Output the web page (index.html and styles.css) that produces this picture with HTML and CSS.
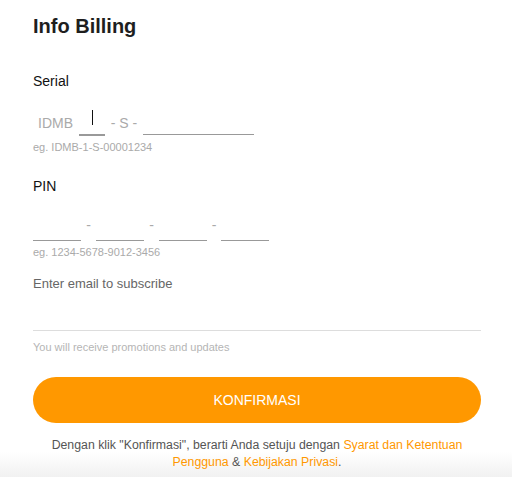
FILE: index.html
```html
<!DOCTYPE html>
<html>
<head>
  <meta charset="UTF-8">
  <title>Info Billing</title>
  <link rel="stylesheet" href="styles.css">
</head>
<body>
  <div class="page">
    <h1 class="title">Info Billing</h1>

    <div class="group">
      <label class="label">Serial</label>
      <div class="row serial">
        <span class="prefix">IDMB</span>
        <span class="field field-short">
          <input type="text">
          <span class="caret"></span>
        </span>
        <span class="sep">- S -</span>
        <input type="text" class="field field-long">
      </div>
      <p class="hint">eg. IDMB-1-S-00001234</p>
    </div>

    <div class="group group-pin">
      <label class="label">PIN</label>
      <div class="row pin">
        <input type="text" class="field field-pin">
        <span class="dash">-</span>
        <input type="text" class="field field-pin">
        <span class="dash">-</span>
        <input type="text" class="field field-pin">
        <span class="dash">-</span>
        <input type="text" class="field field-pin">
      </div>
      <p class="hint hint-pin">eg. 1234-5678-9012-3456</p>
    </div>

    <div class="email">
      <label class="email-label">Enter email to subscribe</label>
      <input type="email" class="email-input">
      <p class="hint hint-email">You will receive promotions and updates</p>
    </div>

    <button class="confirm">KONFIRMASI</button>

    <p class="terms">Dengan klik "Konfirmasi", berarti Anda setuju dengan <a href="#">Syarat dan Ketentuan</a><br><a href="#">Pengguna</a> &amp; <a href="#">Kebijakan Privasi</a>.</p>
  </div>
</body>
</html>
```

FILE: styles.css
```css
* {
  box-sizing: border-box;
}

html,
body{
  height: 100%;
  margin: 0;
  font-family: "Liberation Sans", Arial, sans-serif;
}

html{
  background: linear-gradient(to bottom, #fff 0, #fff 452px, #f1f1f1 477px);
}

body{
  background: transparent;
}

.page{
  padding: 0 31px 0 33px;
}

.title{
  margin: 14px 0 0;
  font-size: 20px;
  line-height: 24px;
  font-weight: bold;
  color: #1e1e1e;
}

.group{
  margin-top: 33px;
}

.group-pin{
  margin-top: 22px;
}

.label{
  display: block;
  font-size: 14px;
  line-height: 20px;
  color: #111;
}

.row{
  display: flex;
  align-items: flex-end;
  margin-top: 20px;
  font-size: 14px;
  line-height: 24px;
  color: #aaa;
}

.pin{
  margin-top: 21px;
}

.field,
.field input{
  height: 24px;
  margin: 0;
  padding: 0;
  border: 0;
  border-bottom: 1px solid #999;
  background: transparent;
  font: inherit;
  outline: none;
}

.prefix{
  padding-left: 5px;
  width: 46px;
}

.field-short{
  position: relative;
  display: block;
  width: 26px;
}

.field-short input{
  width: 100%;
}

.caret{
  position: absolute;
  left: 13px;
  top: -1px;
  width: 1px;
  height: 15px;
  background: #111;
}

.sep{
  width: 38px;
  text-align: center;
}

.field-long{
  width: 111px;
}

.field-pin{
  width: 48px;
}

.dash{
  width: 15px;
  line-height: 16px;
  margin-bottom: 8px;
  text-align: center;
}

.dash:nth-of-type(3){
  width: 14px;
}

.hint{
  margin: 5px 0 0;
  font-size: 11px;
  line-height: 14px;
  color: #aaa;
}

.hint-pin{
  margin-top: 4px;
}

.email{
  margin-top: 16px;
}

.email-label{
  display: block;
  font-size: 13px;
  line-height: 18px;
  color: #666;
}

.email-input{
  display: block;
  width: 100%;
  height: 38px;
  margin: 0;
  padding: 0;
  border: 0;
  border-bottom: 1px solid #ddd;
  outline: none;
}

.hint-email{
  margin-top: 9px;
  color: #b5b5b5;
}

.confirm{
  display: block;
  width: 100%;
  height: 46px;
  margin-top: 23px;
  border: 0;
  border-radius: 23px;
  background: #ff9800;
  color: white;
  font-family: inherit;
  font-size: 14px;
  cursor: pointer;
}

.terms{
  margin: 14px 0 0;
  font-size: 12.3px;
  line-height: 17px;
  text-align: center;
  color: #555;
}

.terms a{
  color: #ff9800;
  text-decoration: none;
}
```
